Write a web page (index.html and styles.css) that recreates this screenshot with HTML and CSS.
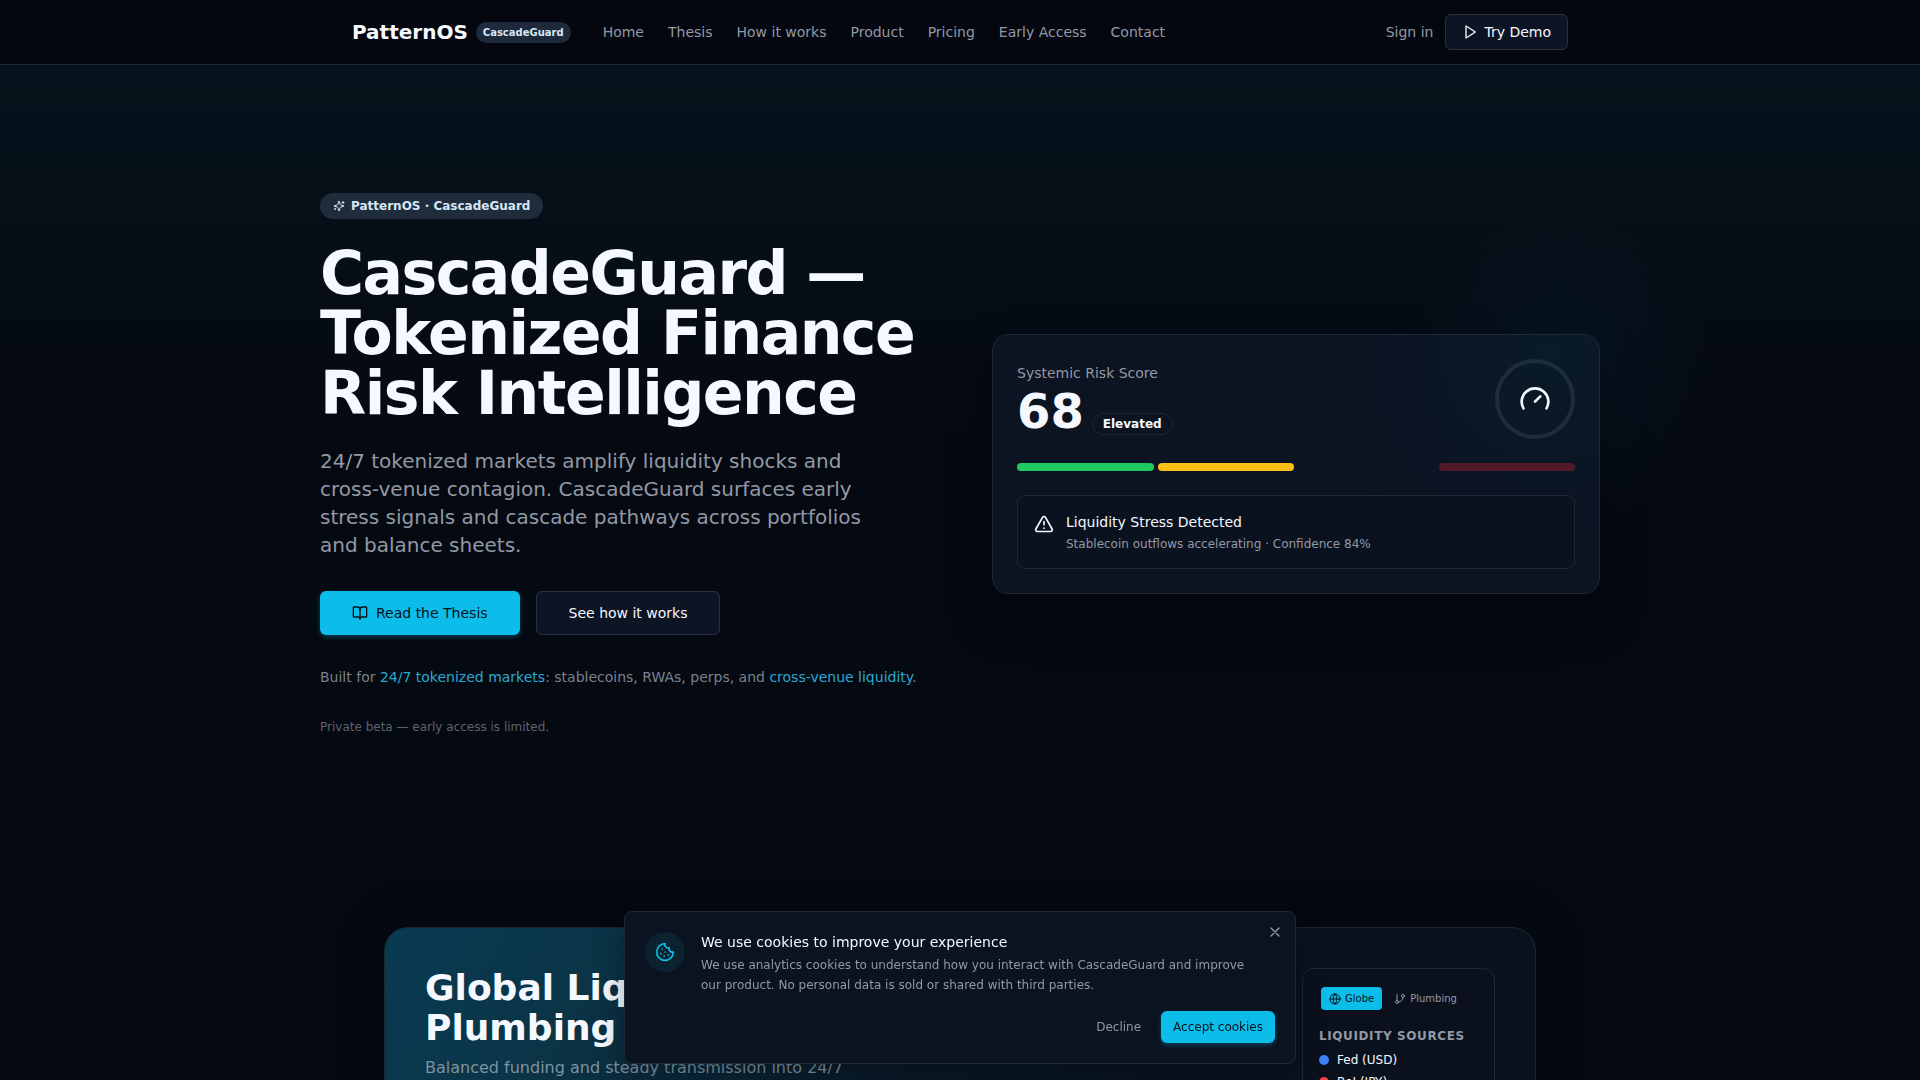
FILE: index.html
```html
<!DOCTYPE html>
<html lang="en">
<head>
  <meta charset="UTF-8" />
  <meta name="viewport" content="width=device-width, initial-scale=1" />
  <title>CascadeGuard | PatternOS</title>
  <link rel="stylesheet" href="styles.css">
</head>
<body>
  <header class="site-header">
    <div class="header-inner">
      <a href="#" class="brand">
        <span class="brand-name">PatternOS</span>
        <span class="brand-badge">CascadeGuard</span>
      </a>
      <nav class="main-nav">
        <a href="#">Home</a>
        <a href="#thesis">Thesis</a>
        <a href="#how">How it works</a>
        <a href="#product">Product</a>
        <a href="#pricing">Pricing</a>
        <a href="#early-access">Early Access</a>
        <a href="#contact">Contact</a>
      </nav>
      <div class="header-actions">
        <a href="#signin" class="sign-in">Sign in</a>
        <button type="button" class="btn btn-outline btn-demo">
          <svg class="icon" viewBox="0 0 24 24"><polygon points="6 3 20 12 6 21 6 3" /></svg>
          Try Demo
        </button>
      </div>
    </div>
  </header>

  <main>
    <!-- Hero -->
    <section class="hero">
      <div class="hero-grid">
        <div class="hero-copy">
          <span class="pill">
            <svg class="icon" viewBox="0 0 24 24">
              <path d="M9.937 15.5A2 2 0 0 0 8.5 14.063l-6.135-1.582a.5.5 0 0 1 0-.962L8.5 9.936A2 2 0 0 0 9.937 8.5l1.582-6.135a.5.5 0 0 1 .963 0L14.063 8.5A2 2 0 0 0 15.5 9.937l6.135 1.581a.5.5 0 0 1 0 .964L15.5 14.063a2 2 0 0 0-1.437 1.437l-1.582 6.135a.5.5 0 0 1-.963 0z" />
              <path d="M20 3v4M22 5h-4M4 17v2M5 18H3" />
            </svg>
            PatternOS · CascadeGuard
          </span>
          <h1>CascadeGuard — Tokenized Finance Risk Intelligence</h1>
          <p class="lead">24/7 tokenized markets amplify liquidity shocks and cross-venue contagion. CascadeGuard surfaces early stress signals and cascade pathways across portfolios and balance sheets.</p>
          <div class="hero-buttons">
            <button type="button" class="btn btn-primary btn-large">
              <svg class="icon" viewBox="0 0 24 24">
                <path d="M12 7v14" />
                <path d="M3 18a1 1 0 0 1-1-1V4a1 1 0 0 1 1-1h5a4 4 0 0 1 4 4 4 4 0 0 1 4-4h5a1 1 0 0 1 1 1v13a1 1 0 0 1-1 1h-6a3 3 0 0 0-3 3 3 3 0 0 0-3-3z" />
              </svg>
              Read the Thesis
            </button>
            <button type="button" class="btn btn-outline btn-large">See how it works</button>
          </div>
          <p class="built-for">Built for <span class="accent">24/7 tokenized markets</span>: stablecoins, RWAs, perps, and <span class="accent">cross-venue liquidity</span>.</p>
          <p class="beta-note">Private beta — early access is limited.</p>
        </div>

        <div class="score-wrap">
          <div class="score-card">
            <div class="score-top">
              <div>
                <p class="score-label">Systemic Risk Score</p>
                <div class="score-row">
                  <span class="score-value">68</span>
                  <span class="score-badge">Elevated</span>
                </div>
              </div>
              <div class="gauge">
                <svg class="icon" viewBox="0 0 24 24">
                  <path d="m12 14 4-4" />
                  <path d="M3.34 19a10 10 0 1 1 17.32 0" />
                </svg>
              </div>
            </div>
            <div class="levels">
              <span class="level level-low"></span>
              <span class="level level-medium"></span>
              <span class="level"></span>
              <span class="level level-critical"></span>
            </div>
            <div class="alert">
              <svg class="icon" viewBox="0 0 24 24">
                <path d="m21.73 18-8-14a2 2 0 0 0-3.48 0l-8 14A2 2 0 0 0 4 21h16a2 2 0 0 0 1.73-3" />
                <path d="M12 9v4M12 17h.01" />
              </svg>
              <div>
                <p class="alert-title">Liquidity Stress Detected</p>
                <p class="alert-text">Stablecoin outflows accelerating · Confidence 84%</p>
              </div>
            </div>
          </div>
        </div>
      </div>
    </section>

    <!-- Liquidity globe -->
    <section class="plumbing">
      <div class="plumbing-card">
        <div class="plumbing-copy">
          <h2>Global Liquidity Plumbing</h2>
          <p>Balanced funding and steady transmission into 24/7 tokenized markets.</p>
        </div>
        <div class="sources">
          <div class="tabs">
            <button type="button" class="tab tab-active">
              <svg class="icon" viewBox="0 0 24 24">
                <circle cx="12" cy="12" r="10" />
                <path d="M12 2a14.5 14.5 0 0 0 0 20 14.5 14.5 0 0 0 0-20" />
                <path d="M2 12h20" />
              </svg>
              Globe
            </button>
            <button type="button" class="tab">
              <svg class="icon" viewBox="0 0 24 24">
                <path d="M6 3v12" />
                <circle cx="18" cy="6" r="3" />
                <circle cx="6" cy="18" r="3" />
                <path d="M18 9a9 9 0 0 1-9 9" />
              </svg>
              Plumbing
            </button>
          </div>
          <h3>Liquidity Sources</h3>
          <ul>
            <li><span class="dot dot-fed"></span>Fed (USD)</li>
            <li><span class="dot dot-boj"></span>BoJ (JPY)</li>
          </ul>
        </div>
      </div>
    </section>
  </main>

  <!-- Cookie banner -->
  <div class="cookie" role="dialog" aria-labelledby="cookie-title">
    <button type="button" class="cookie-close" aria-label="Close">
      <svg class="icon" viewBox="0 0 24 24"><path d="M18 6 6 18M6 6l12 12" /></svg>
    </button>
    <div class="cookie-icon">
      <svg class="icon" viewBox="0 0 24 24">
        <path d="M12 2a10 10 0 1 0 10 10 4 4 0 0 1-5-5 4 4 0 0 1-5-5" />
        <path d="M8.5 8.5v.01M16 15.5v.01M12 12v.01M11 17v.01M7 14v.01" />
      </svg>
    </div>
    <div class="cookie-body">
      <p class="cookie-title" id="cookie-title">We use cookies to improve your experience</p>
      <p class="cookie-text">We use analytics cookies to understand how you interact with CascadeGuard and improve our product. No personal data is sold or shared with third parties.</p>
      <div class="cookie-actions">
        <button type="button" class="btn btn-small btn-ghost">Decline</button>
        <button type="button" class="btn btn-small btn-primary">Accept cookies</button>
      </div>
    </div>
  </div>
</body>
</html>
```

FILE: styles.css
```css
* {
  box-sizing: border-box;
}

html {
  height: 100%;
  overflow: hidden;
}

body {
  height: 100%;
  margin: 0;
  overflow: hidden;
  font-family: "DejaVu Sans", sans-serif;
  font-size: 16px;
  line-height: 24px;
  color: #f5f9ff;
  background: #050912;
}

h1, h2, h3, p, ul {
  margin: 0;
  padding: 0;
}

a {
  color: inherit;
  text-decoration: none;
}

button {
  font-family: inherit;
  cursor: pointer;
}

.icon {
  width: 16px;
  height: 16px;
  flex-shrink: 0;
  fill: none;
  stroke: currentColor;
  stroke-width: 2;
  stroke-linecap: round;
  stroke-linejoin: round;
}

/* Buttons */
.btn {
  display: inline-flex;
  align-items: center;
  justify-content: center;
  gap: 8px;
  border: 1px solid transparent;
  border-radius: 6px;
  font-size: 14px;
  line-height: 20px;
}

.btn-primary {
  border: 0;
  background: #0cbde9;
  color: #04121c;
  box-shadow: 0 2px 5px rgba(12, 189, 233, 0.3);
}

.btn-outline {
  background: #0d1424;
  border-color: #283040;
  color: #f5f9ff;
}

.btn-ghost {
  border: 0;
  background: transparent;
  color: #9299a5;
}

.btn-large {
  height: 44px;
  padding: 0 32px;
}

.btn-small {
  height: 32px;
  padding: 0 12px;
  font-size: 12px;
}

/* Header */
.site-header {
  position: relative;
  z-index: 2;
  background: #04070f;
  border-bottom: 1px solid #1c2731;
}

.header-inner {
  display: flex;
  align-items: center;
  max-width: 1280px;
  height: 64px;
  margin: 0 auto;
  padding: 0 32px;
}

.brand {
  display: flex;
  align-items: center;
  gap: 8px;
}

.brand-name {
  font-size: 20px;
  font-weight: 700;
  line-height: 28px;
}

.brand-badge {
  padding: 2px 6px;
  border: 1px solid transparent;
  border-radius: 999px;
  background: #1e2a3b;
  color: #d5e6f7;
  font-size: 10px;
  font-weight: 700;
  line-height: 15px;
}

.main-nav {
  display: flex;
  gap: 24px;
  margin-left: 32px;
  font-size: 14px;
  line-height: 20px;
  color: #9299a5;
}

.header-actions {
  display: flex;
  align-items: center;
  gap: 12px;
  margin-left: auto;
}

.sign-in {
  font-size: 14px;
  line-height: 20px;
  color: #9299a5;
}

.btn-demo {
  height: 36px;
  padding: 0 16px;
  gap: 6px;
}

/* Hero */
.hero {
  padding: 128px 0;
  background: linear-gradient(#05141c, #060f18 20%, #050a13 38%, #050912 50%);
}

.hero-grid {
  display: grid;
  grid-template-columns: 1fr 1fr;
  gap: 64px;
  align-items: center;
  max-width: 1280px;
  margin: 0 auto;
}

.hero-copy {
  display: flex;
  flex-direction: column;
  align-items: flex-start;
}

.pill {
  display: inline-flex;
  align-items: center;
  gap: 6px;
  padding: 4px 12px;
  border: 1px solid transparent;
  border-radius: 999px;
  background: #1e2c3c;
  color: #d5e6f7;
  font-size: 12px;
  font-weight: 600;
  line-height: 16px;
}

.pill .icon {
  width: 12px;
  height: 12px;
}

h1 {
  margin-top: 24px;
  font-size: 60px;
  font-weight: 700;
  line-height: 60px;
  letter-spacing: -0.025em;
}

.lead {
  max-width: 576px;
  margin-top: 24px;
  font-size: 20px;
  line-height: 28px;
  color: #9299a5;
}

.hero-buttons {
  display: flex;
  gap: 16px;
  margin-top: 32px;
}

.built-for {
  margin-top: 32px;
  font-size: 14px;
  line-height: 20px;
  color: #7a818c;
}

.accent {
  color: #2aa9d0;
}

.beta-note {
  margin-top: 32px;
  font-size: 12px;
  line-height: 16px;
  color: #5d636e;
}

/* Risk score card */
.score-wrap {
  position: relative;
}

/* soft glow behind the top right corner */
.score-wrap::before {
  content: "";
  position: absolute;
  top: -120px;
  right: -120px;
  width: 320px;
  height: 320px;
  background: radial-gradient(closest-side, rgba(12, 189, 233, 0.05), transparent);
}

.score-card {
  position: relative;
  padding: 24px;
  border: 1px solid #1f2833;
  border-radius: 16px;
  background: radial-gradient(circle at 92% 8%, #0a1a29, #0b1523 140px, #0c1321 240px);
  box-shadow: 0 24px 50px rgba(0, 0, 0, 0.25);
}

.score-top {
  display: flex;
  align-items: center;
  justify-content: space-between;
}

.score-label {
  font-size: 14px;
  line-height: 20px;
  color: #9299a5;
}

.score-row {
  display: flex;
  align-items: flex-end;
  gap: 8px;
  margin-top: 4px;
}

.score-value {
  font-size: 48px;
  font-weight: 700;
  line-height: 48px;
}

.score-badge {
  padding: 2px 10px;
  border: 1px solid #1d2530;
  border-radius: 999px;
  font-size: 12px;
  font-weight: 600;
  line-height: 16px;
}

.gauge {
  display: flex;
  align-items: center;
  justify-content: center;
  width: 80px;
  height: 80px;
  border: 4px solid #1e2d3b;
  border-radius: 50%;
}

.gauge .icon {
  width: 32px;
  height: 32px;
}

.levels {
  display: grid;
  grid-template-columns: repeat(4, 1fr);
  gap: 4px;
  margin-top: 24px;
}

.level {
  height: 8px;
  border-radius: 4px;
}

.level-low {
  background: #22c95e;
}

.level-medium {
  background: #fbbf16;
}

.level-critical {
  background: #501a28;
}

.alert {
  display: flex;
  gap: 12px;
  margin-top: 24px;
  padding: 16px;
  border: 1px solid #1f2833;
  border-radius: 8px;
  background: #0b121f;
}

.alert .icon {
  width: 20px;
  height: 20px;
  margin-top: 2px;
}

.alert-title {
  font-size: 14px;
  line-height: 20px;
}

.alert-text {
  margin-top: 4px;
  font-size: 12px;
  line-height: 16px;
  color: #9299a5;
}

/* Global liquidity card */
.plumbing {
  padding: 64px 0;
}

.plumbing-card {
  display: flex;
  justify-content: space-between;
  align-items: flex-start;
  max-width: 1152px;
  min-height: 560px;
  margin: 0 auto;
  padding: 40px;
  border: 1px solid #1b2734;
  border-radius: 24px;
  background: linear-gradient(120deg, #083a52, #0b3446 16%, #0a1c2b 36%, #081521 55%, #0a111d 80%);
  box-shadow: 0 0 50px rgba(0, 0, 0, 0.25);
}

.plumbing-copy {
  width: 440px;
}

h2 {
  font-size: 36px;
  font-weight: 700;
  line-height: 40px;
}

.plumbing-copy p {
  margin-top: 8px;
  color: #7d93a1;
}

.sources {
  width: 193px;
  padding: 16px;
  border: 1px solid #1f2833;
  border-radius: 12px;
  background: #0a111d;
}

.tabs {
  display: flex;
  gap: 4px;
  padding: 2px;
}

.tab {
  display: flex;
  align-items: center;
  gap: 4px;
  padding: 4px 8px;
  border: 0;
  border-radius: 4px;
  background: transparent;
  color: #9299a5;
  font-size: 10px;
  line-height: 15px;
}

.tab .icon {
  width: 12px;
  height: 12px;
}

.tab-active {
  background: #0cbde9;
  color: #04121c;
}

h3 {
  margin-top: 16px;
  font-size: 12px;
  font-weight: 600;
  line-height: 16px;
  letter-spacing: 0.05em;
  text-transform: uppercase;
  color: #9299a5;
}

.sources ul {
  display: flex;
  flex-direction: column;
  gap: 6px;
  margin-top: 8px;
  list-style: none;
}

.sources li {
  display: flex;
  align-items: center;
  gap: 8px;
  font-size: 12px;
  line-height: 16px;
}

.dot {
  width: 10px;
  height: 10px;
  border-radius: 50%;
}

.dot-fed {
  background: #3b82f6;
}

.dot-boj {
  background: #ef4444;
}

/* Cookie banner */
.cookie {
  position: fixed;
  right: 16px;
  bottom: 16px;
  left: 16px;
  z-index: 3;
  display: flex;
  gap: 16px;
  max-width: 672px;
  margin: 0 auto;
  padding: 20px;
  border: 1px solid #1f2833;
  border-radius: 8px;
  background: #0b1220;
  box-shadow: 0 10px 30px rgba(0, 0, 0, 0.3);
}

.cookie-close {
  position: absolute;
  top: 12px;
  right: 12px;
  display: flex;
  padding: 0;
  border: 0;
  background: none;
  color: #9299a5;
}

.cookie-icon {
  display: flex;
  align-items: center;
  justify-content: center;
  width: 40px;
  height: 40px;
  flex-shrink: 0;
  border-radius: 50%;
  background: #0b2231;
  color: #0cbde9;
}

.cookie-icon .icon {
  width: 20px;
  height: 20px;
}

.cookie-body {
  flex: 1;
}

.cookie-title {
  font-size: 14px;
  line-height: 20px;
}

.cookie-text {
  max-width: 560px;
  margin-top: 3px;
  font-size: 12px;
  line-height: 20px;
  color: #9299a5;
}

.cookie-actions {
  display: flex;
  justify-content: flex-end;
  gap: 8px;
  margin-top: 16px;
}
```
